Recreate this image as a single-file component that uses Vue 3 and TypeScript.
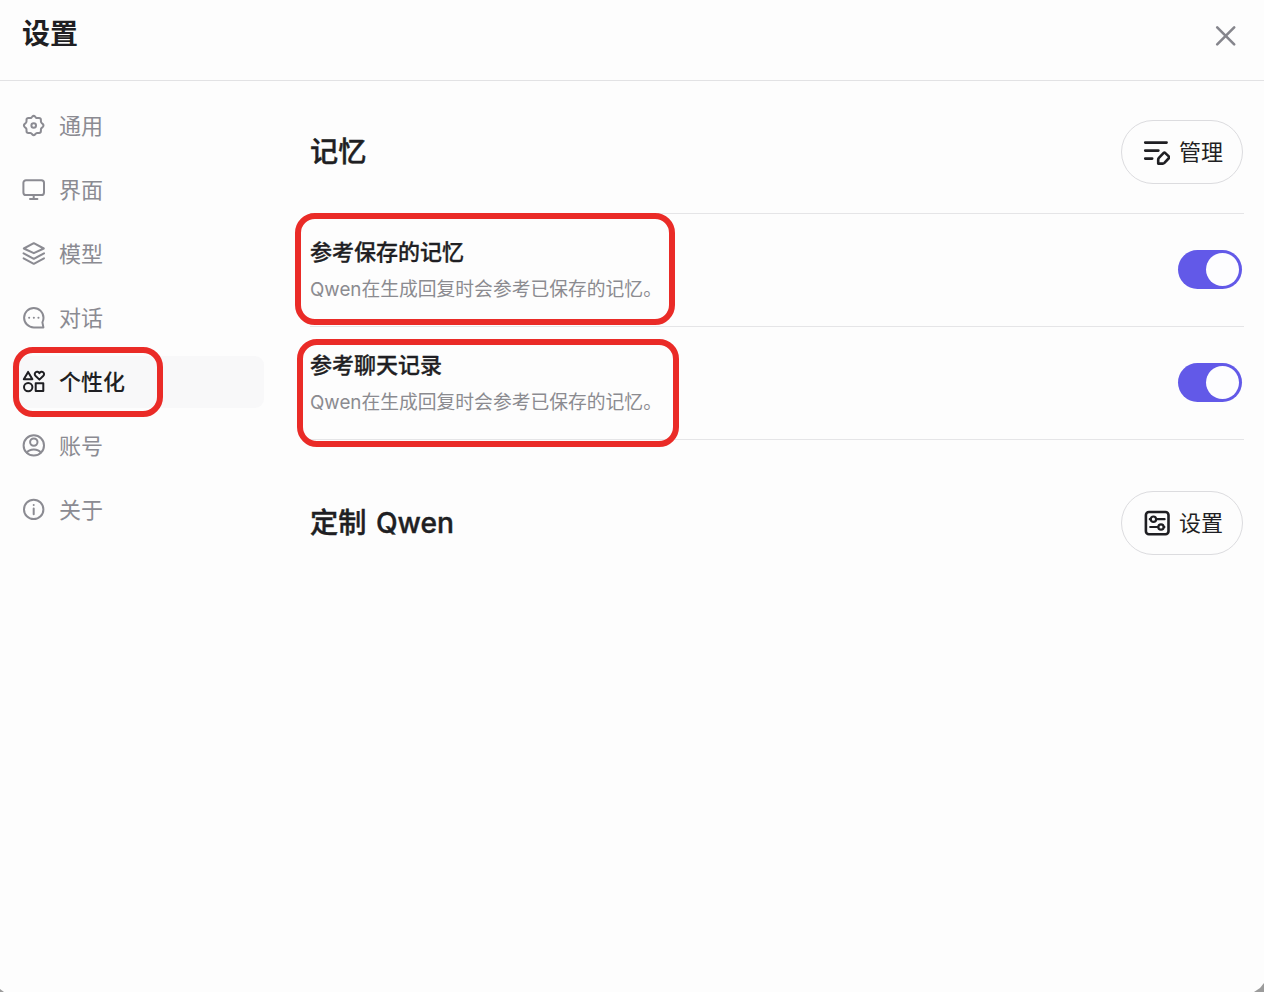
<template>
  <div class="settings">
    <header class="settings-header">
      <h1>设置</h1>
      <button class="close" aria-label="关闭">
        <svg width="24" height="24" viewBox="0 0 24 24">
          <path d="M3.2 3.4L20.2 20.4M20.2 3.4L3.2 20.4" />
        </svg>
      </button>
    </header>

    <div class="settings-body">
      <nav class="sidebar">
        <a v-for="item in menus" :key="item.key" class="menu-item" :class="{ active: item.key === current }" @click="current = item.key">
          <svg class="menu-icon" width="24" height="24" viewBox="0 0 24 24">
            <path v-for="d in item.paths" :key="d" :d="d" />
          </svg>
          <span>{{ item.label }}</span>
          <i v-if="item.key === 'personal'" class="mark mark-menu"></i>
        </a>
      </nav>

      <main class="content">
        <section class="section-header">
          <h2>记忆</h2>
          <button class="pill">
            <svg width="28" height="28" viewBox="0 0 28 28">
              <path d="M3.2 4.6H24.6M3.2 12.6H16.4M3.2 20.6H10.2" />
              <path d="M16.2 25.6V21.6Q16.2 20.7 16.9 19.9L21.7 14.9Q22.4 14.2 23.1 14.9L27 18.6Q27.6 19.3 27 20L22.4 24.9Q21.7 25.6 20.8 25.6Z" />
            </svg>
            <span>管理</span>
          </button>
        </section>

        <div v-for="row in rows" :key="row.key" class="row">
          <div class="row-text">
            <h3>{{ row.title }}</h3>
            <p>{{ row.desc }}</p>
          </div>
          <button class="switch" :class="{ on: row.enabled }" @click="row.enabled = !row.enabled">
            <span class="knob"></span>
          </button>
          <i class="mark" :class="'mark-' + row.key"></i>
        </div>

        <section class="section-header custom">
          <h2>定制 Qwen</h2>
          <button class="pill">
            <svg width="28" height="28" viewBox="0 0 28 28">
              <rect x="3.9" y="3" width="22.6" height="22.2" rx="3" />
              <g class="sliders">
                <circle cx="11.4" cy="10.2" r="2.7" />
                <circle cx="19" cy="18" r="2.7" />
                <path d="M7.8 10.2H8.7M14.1 10.2H22.6M8.2 18H16.3M21.7 18H22.4" />
              </g>
            </svg>
            <span>设置</span>
          </button>
        </section>
      </main>
    </div>
  </div>
</template>

<script setup lang="ts">
import { reactive, ref } from "vue"

interface Menu {
  key: string
  label: string
  paths: string[]
}

const current = ref("personal")

const menus: Menu[] = [
  {
    key: "general",
    label: "通用",
    paths: [
      "M10.4 2.5Q11.7 1.2 13 2.5L13.8 3.5Q14.5 4.2 15.5 4H17Q18.8 4 18.9 5.8V7.3Q18.9 8.2 19.6 8.9L20.8 10Q22.1 11.5 20.8 12.9L19.6 14Q18.9 14.7 18.9 15.6V17.1Q18.8 18.9 17 19H15.5Q14.5 18.9 13.8 19.6L13 20.5Q11.7 21.9 10.4 20.5L9.6 19.6Q8.9 18.9 7.9 19H6.4Q4.6 18.9 4.5 17.1V15.6Q4.5 14.7 3.8 14L2.6 12.9Q1.3 11.5 2.6 10L3.8 8.9Q4.5 8.2 4.5 7.3V5.8Q4.6 4 6.4 4H7.9Q8.9 4.2 9.6 3.5Z",
      "M11.7 9.2a2.3 2.3 0 1 1 0 4.6a2.3 2.3 0 1 1 0 -4.6Z"
    ]
  },
  {
    key: "interface",
    label: "界面",
    paths: ["M4 2.2H19.4a2.6 2.6 0 0 1 2.6 2.6V14.4a2.6 2.6 0 0 1 -2.6 2.6H4A2.6 2.6 0 0 1 1.4 14.4V4.8A2.6 2.6 0 0 1 4 2.2Z", "M11.7 17V20.8M8 20.9H15.4"]
  },
  {
    key: "model",
    label: "模型",
    paths: ["M11.8 1.2L21.8 6.5L11.8 11.2L1.8 6.5Z", "M1.6 11.3L11.8 16.8L22 11.3", "M1.6 16.3L11.8 21.8L22 16.3"]
  },
  {
    key: "chat",
    label: "对话",
    paths: ["M20.4 16.4L21.4 21.4H11.8A9.7 9.7 0 1 1 21.5 11.7C21.5 13.5 21.1 15 20.4 16.4Z", "M7.1 11.7H7.2M11.8 11.7H11.9M16.4 11.7H16.5"]
  },
  {
    key: "personal",
    label: "个性化",
    paths: [
      "M6.1 1.9L10.4 9.2H1.8Z",
      "M17.4 9.6L13.4 5.7C11.2 3.2 15 -0.2 17.4 3.3C19.8 -0.2 23.6 3.2 21.4 5.7Z",
      "M6.2 12.9a4.2 4.2 0 1 1 0 8.4a4.2 4.2 0 1 1 0 -8.4Z",
      "M13.7 13.2H21.3V21H13.7Z"
    ]
  },
  {
    key: "account",
    label: "账号",
    paths: [
      "M11.8 1.2a10.2 10.2 0 1 1 0 20.4a10.2 10.2 0 1 1 0 -20.4Z",
      "M11.8 4.4a3.7 3.7 0 1 1 0 7.4a3.7 3.7 0 1 1 0 -7.4Z",
      "M4.8 18.6C6.3 16.3 9 15.4 11.8 15.4S17.3 16.3 18.8 18.6"
    ]
  },
  {
    key: "about",
    label: "关于",
    paths: ["M11.7 1.7a9.7 9.7 0 1 1 0 19.4a9.7 9.7 0 1 1 0 -19.4Z", "M11.7 10.6V16.2M11.7 6.9V7"]
  }
]

const rows = reactive([
  { key: "saved", title: "参考保存的记忆", desc: "Qwen在生成回复时会参考已保存的记忆。", enabled: true },
  { key: "history", title: "参考聊天记录", desc: "Qwen在生成回复时会参考已保存的记忆。", enabled: true }
])
</script>

<style>
body {
  background: #9b9b9b;
}
</style>

<style scoped>
.settings {
  height: 992px;
  box-sizing: border-box;
  background: #fdfdfd;
  clip-path: polygon(0 0, 100% 0, 100% calc(100% - 9px), calc(100% - 4px) calc(100% - 4px), calc(100% - 10px) 100%, 4px 100%, 0 calc(100% - 3px));
  overflow: hidden;
  color: #1f1f23;
  font-family: Inter, "Noto Sans CJK SC", sans-serif;
}

h1,
h2,
h3,
p {
  margin: 0;
}

button {
  font-family: inherit;
  color: inherit;
  background: none;
  border: none;
  padding: 0;
}

svg {
  fill: none;
  stroke: currentColor;
  stroke-linecap: round;
  stroke-linejoin: round;
  flex-shrink: 0;
}

.settings-header {
  display: flex;
  justify-content: space-between;
  height: 80px;
  padding: 0 26px 0 22px;
  border-bottom: 1px solid #e2e2e4;
}

h1 {
  font-size: 28px;
  line-height: 68px;
  font-weight: 700;
}

.close {
  height: 72px;
  color: #85858c;
}

.close svg {
  display: block;
  stroke-width: 2.6;
}

.settings-body {
  display: flex;
}

.sidebar {
  width: 252px;
  padding: 19px 0 0 12px;
  display: flex;
  flex-direction: column;
  gap: 12px;
}

.menu-item {
  position: relative;
  display: flex;
  align-items: center;
  gap: 13px;
  height: 52px;
  padding-left: 10px;
  border-radius: 9px;
  font-size: 22px;
  color: #8b8b92;
}

.menu-item span {
  line-height: 32px;
}

.menu-icon {
  stroke-width: 2;
}

.menu-item.active {
  background: #f8f8f9;
  color: #1f1f23;
}

.menu-item.active span {
  font-weight: 500;
}

/* red callout frames */
.mark {
  position: absolute;
  box-sizing: border-box;
  border: 6px solid #ea2b27;
  border-radius: 20px;
}

.mark-menu {
  left: 1px;
  top: -9px;
  width: 150px;
  height: 70px;
}

.mark-saved {
  left: -15px;
  top: -1px;
  width: 380px;
  height: 112px;
}

.mark-history {
  left: -13px;
  top: 12px;
  width: 382px;
  height: 108px;
}

.content {
  flex: 1;
  padding: 19px 20px 0 46px;
}

.section-header {
  display: flex;
  align-items: center;
  justify-content: space-between;
  height: 114px;
  padding: 20px 1px 29px 0;
  box-sizing: border-box;
  border-bottom: 1px solid #e5e5e7;
}

.section-header.custom {
  border-bottom: none;
  margin-top: 31px;
  padding-bottom: 30px;
}

h2 {
  font-size: 28.2px;
  line-height: 40px;
  font-weight: 500;
  word-spacing: 2px;
  -webkit-text-stroke: 0.4px currentColor;
}

.pill {
  display: flex;
  align-items: center;
  gap: 9px;
  width: 122px;
  height: 64px;
  box-sizing: border-box;
  padding-left: 20px;
  border: 1px solid #dcdcdf;
  border-radius: 32px;
  font-size: 22px;
}

.pill span {
  line-height: 32px;
}

.pill svg {
  stroke-width: 2.6;
}

.sliders {
  stroke-width: 2.2;
}

.row {
  position: relative;
  display: flex;
  align-items: center;
  justify-content: space-between;
  height: 113px;
  box-sizing: border-box;
  padding: 0 2px 0 0;
  border-bottom: 1px solid #e5e5e7;
}

h3 {
  font-size: 22px;
  line-height: 32px;
  font-weight: 500;
  -webkit-text-stroke: 0.3px currentColor;
}

.row-text p {
  margin-top: 8px;
  font-size: 18.8px;
  line-height: 28px;
  color: #8b8b90;
}

.switch {
  display: flex;
  align-items: center;
  width: 64px;
  height: 39px;
  margin-bottom: 1px;
  padding: 0 3px;
  border-radius: 20px;
  background: #d4d4d8;
}

.switch.on {
  justify-content: flex-end;
  background: #6259e8;
}

.knob {
  width: 33px;
  height: 33px;
  border-radius: 50%;
  background: #fdfdff;
}
</style>
